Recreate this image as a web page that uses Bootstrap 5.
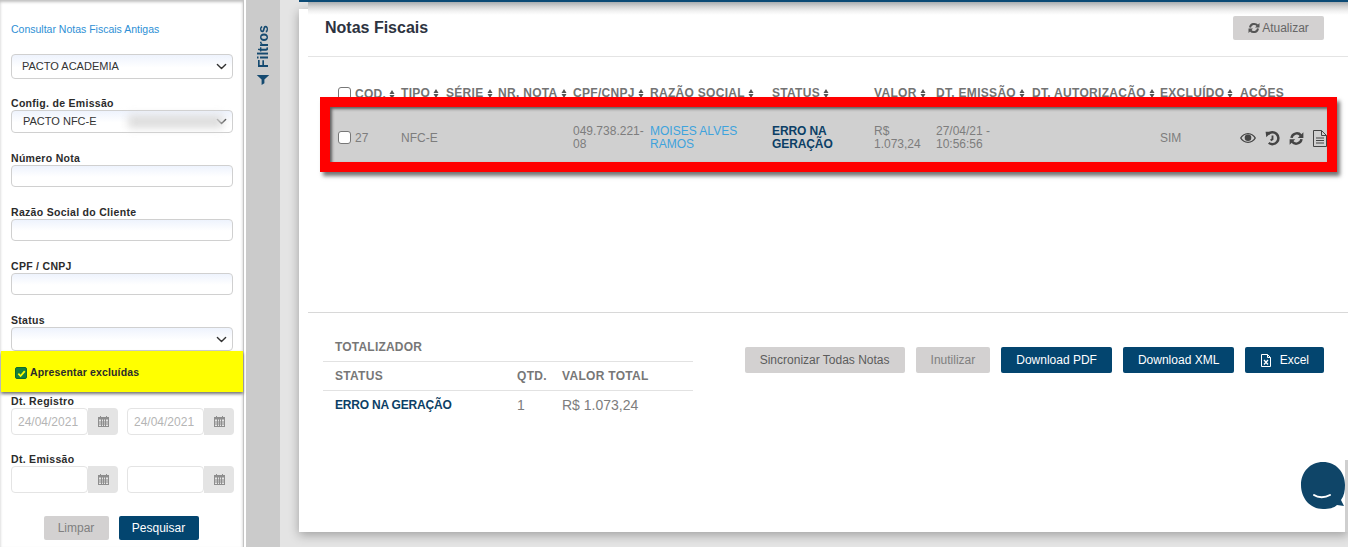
<!DOCTYPE html>
<html lang="pt-BR">
<head>
<meta charset="utf-8">
<title>Notas Fiscais</title>
<link rel="stylesheet" href="https://cdn.jsdelivr.net/npm/bootstrap@5.3.0/dist/css/bootstrap.min.css">
<style>
html,body{height:547px;overflow:hidden;margin:0;background:#e4e4e4;font-family:"Liberation Sans",Arial,sans-serif;}
.shell{height:547px;position:relative;overflow:hidden;}
.side{width:243px;flex:none;background:#fff;padding:23px 10px 0 11px;position:relative;z-index:2;height:547px;box-shadow:0 2px 3px rgba(0,0,0,.25) inset;}
.sep{width:3px;flex:none;background:#fff;border-left:1px solid #c4c4c4;}
.strip{width:34px;flex:none;background:#cbcbcb;padding-top:25px;}
.strip-label{writing-mode:vertical-rl;transform:rotate(180deg);color:#154a70;font-weight:700;font-size:14px;line-height:34px;display:flex;align-items:center;gap:7px;margin:0 auto;height:60px;}
.gutter{width:19px;flex:none;}
.stage{flex:1;position:relative;}
.topline{height:2px;background:#0b4a75;position:relative;z-index:3;}
.topline::after{content:"";position:absolute;left:9px;right:0;top:2px;height:13px;background:linear-gradient(#a9adb0,#d4d4d4 35%,#f1f1f1 70%,#fff);}
.panel{position:absolute;left:0;right:0;top:9px;height:523px;background:#fff;box-shadow:0 3px 10px rgba(0,0,0,.3);}
.panel-tail{position:absolute;right:0;top:451px;width:3px;height:72px;background:#cfcfcf;}
.old-link{font-size:10.5px;line-height:13px;color:#2d8fd5;text-decoration:none;display:block;margin-bottom:18px;}
.fld{font-size:11px;color:#333;border:1px solid #d0d0d0;border-radius:4px;width:222px;padding:0 10px;height:24px;min-height:0;background-color:#fff;background-image:linear-gradient(#eef3fd,#fff 55%);box-shadow:none;}
input.fld{height:22px;}
select.fld{background-image:url("data:image/svg+xml,%3csvg xmlns='http://www.w3.org/2000/svg' viewBox='0 0 16 16'%3e%3cpath fill='none' stroke='%23333' stroke-linecap='round' stroke-linejoin='round' stroke-width='2' d='m2 5 6 6 6-6'/%3e%3c/svg%3e"),linear-gradient(#eef3fd,#fff 55%);background-repeat:no-repeat;background-position:right 5px center,0 0;background-size:11px 11px,auto;}
.fld-tall{height:25px;}
.fld-short{height:23px;padding-left:11px;}
.lbl{font-size:10.5px;font-weight:700;color:#2b2b2b;line-height:13px;letter-spacing:.3px;margin:0;display:block;}
.gap-a{margin-bottom:18px;}
.gap-b{margin-bottom:19px;}
.blurred{position:absolute;left:117px;top:5px;width:95px;height:13px;background:#dcdcdc;filter:blur(4px);}
.sel-wrap{position:relative;}
.yellow{background:#ff0;height:41px;margin:0 -10px 3px -10px;box-shadow:0 2px 3px rgba(0,0,0,.55);display:flex;align-items:center;padding:3px 0 0 14px;gap:3px;font-size:10.5px;font-weight:700;letter-spacing:.15px;color:#2b2b2b;position:relative;}
.yellow .ck{width:12px;height:12px;border-radius:2px;background:#16803c;border:1px solid #0f6a2f;display:flex;align-items:center;justify-content:center;}
.dates{display:flex;gap:9px;margin-bottom:18px;}
.date-g{display:flex;width:107px;}
.date-i{width:77px;height:27px;font-size:12px;color:#b5b5b5;border:1px solid #e4e4e4;border-radius:4px;padding:0 6px;line-height:26px;background:#fff;}
.date-a{width:30px;height:27px;background:#e4e4e4;border-radius:0 4px 4px 0;display:flex;align-items:center;justify-content:center;}
.side-btns{display:flex;justify-content:center;gap:10px;margin-top:23px;padding-right:2px;}
.bt{border:0;border-radius:2px;font-size:12px;line-height:15px;font-family:inherit;}
.bt-gray{background:#d3d1d1;color:#5c5c5c;}
.bt-mute{background:#d3d1d1;color:#808080;}
.bt-navy{background:#03456f;color:#fff;}
.bt-limpar{width:65px;height:24px;}
.bt-pesq{width:80px;height:24px;}
.panel-head{height:48px;margin-left:9px;border-bottom:1px solid #e4e4e4;padding:0 24px 0 17px;display:flex;justify-content:space-between;align-items:flex-start;}
.panel-title{font-size:16px;font-weight:700;color:#2d3340;margin:9px 0 0;line-height:19px;}
.upd{background:#d3d1d1;color:#666;font-size:12px;height:24px;width:91px;margin-top:7px;display:flex;align-items:center;justify-content:center;gap:2px;}
.grid-wrap{height:256px;border-bottom:1px solid #d8d8d8;margin-left:9px;padding:30px 0 0 22px;}
.nf{table-layout:fixed;width:997px;border-collapse:collapse;font-size:12px;line-height:13px;color:#7d7d7d;}
.nf col:nth-child(1){width:71px}.nf col:nth-child(2){width:45px}.nf col:nth-child(3){width:52px}.nf col:nth-child(4){width:75px}.nf col:nth-child(5){width:77px}.nf col:nth-child(6){width:122px}.nf col:nth-child(7){width:102px}.nf col:nth-child(8){width:62px}.nf col:nth-child(9){width:96px}.nf col:nth-child(10){width:128px}.nf col:nth-child(11){width:80px}.nf col:nth-child(12){width:87px}
.nf th{font-weight:700;font-size:12px;letter-spacing:.3px;padding:0;height:20px;white-space:nowrap;color:#737373;vertical-align:top;}
.nf td{padding:0;height:62px;background:#d0d0d0;vertical-align:middle;}
.nf th:first-child,.nf td:first-child{padding-left:8px;}
.cb{width:13px;height:13px;border:1px solid #777;border-radius:3px;background:#fff;display:inline-block;vertical-align:-2px;margin-right:4px;}
.sort{display:inline-block;width:6px;height:9px;margin-left:3px;vertical-align:-1px;}
.red-box{position:absolute;left:21px;top:88px;width:1017px;height:75px;border:10px solid #f00;box-shadow:3px 4px 4px rgba(0,0,0,.55),inset 2px 2px 3px rgba(0,0,0,.55);pointer-events:none;}
.rz{color:#3ea3dd;}
.st{color:#0c3f66;font-weight:700;letter-spacing:-.1px;}
.acts{display:flex;gap:9px;align-items:center;color:#444;}
.foot{margin-left:9px;display:flex;padding:26px 24px 0 15px;}
.tot{width:370px;font-size:12px;color:#7d7d7d;}
.tot-title{font-weight:700;color:#777;font-size:12px;line-height:17px;padding:0 0 5px 12px;letter-spacing:.2px;}
.tot-row{display:flex;height:29px;align-items:center;border-top:1px solid #e2e2e2;padding-left:12px;}
.c1{width:182px;}.c2{width:45px;}
.tot-h{font-weight:700;color:#777;letter-spacing:.3px;}
.tot-val{font-size:14px;}
.tot-val .st{font-size:12px;letter-spacing:-.2px;}
.foot-btns{flex:1;display:flex;justify-content:flex-end;gap:11px;padding-top:8px;}
.foot-btns .bt{height:26px;padding:0 15px;}
.chat{position:absolute;left:1300px;top:461px;z-index:4;}
</style>
</head>
<body>
<div class="shell d-flex">
  <aside class="side">
    <a href="#" class="old-link">Consultar Notas Fiscais Antigas</a>
    <select class="fld fld-tall form-select d-block gap-a"><option>PACTO ACADEMIA</option></select>
    <label class="lbl">Config. de Emissão</label>
    <div class="sel-wrap gap-b"><select class="fld fld-short form-select d-block"><option>PACTO NFC-E</option></select><div class="blurred"></div></div>
    <label class="lbl">Número Nota</label>
    <input class="fld form-control d-block gap-b" type="text">
    <label class="lbl">Razão Social do Cliente</label>
    <input class="fld form-control d-block gap-b" type="text">
    <label class="lbl">CPF / CNPJ</label>
    <input class="fld form-control d-block gap-b" type="text">
    <label class="lbl">Status</label>
    <select class="fld form-select d-block"><option></option></select>
    <div class="yellow"><span class="ck"><svg width="9" height="9" viewBox="0 0 10 10"><path d="M1.5 5.2 4 7.8 8.6 2.4" fill="none" stroke="#ff0" stroke-width="2"/></svg></span><span>Apresentar excluídas</span></div>
    <label class="lbl">Dt. Registro</label>
    <div class="dates">
      <div class="date-g"><div class="date-i">24/04/2021</div><div class="date-a"><svg width="11" height="11" viewBox="0 0 11 11"><path fill="#8e8e8e" d="M2 0h1v1h5V0h1v1h2v10H0V1h2zM1 3.500V10h9V3.500z"/><path stroke="#8e8e8e" d="M1 6h9M1 8h9M3.500 3v7M5.500 3v7M7.500 3v7"/></svg></div></div>
      <div class="date-g"><div class="date-i">24/04/2021</div><div class="date-a"><svg width="11" height="11" viewBox="0 0 11 11"><path fill="#8e8e8e" d="M2 0h1v1h5V0h1v1h2v10H0V1h2zM1 3.500V10h9V3.500z"/><path stroke="#8e8e8e" d="M1 6h9M1 8h9M3.500 3v7M5.500 3v7M7.500 3v7"/></svg></div></div>
    </div>
    <label class="lbl">Dt. Emissão</label>
    <div class="dates mb-0">
      <div class="date-g"><div class="date-i"></div><div class="date-a"><svg width="11" height="11" viewBox="0 0 11 11"><path fill="#8e8e8e" d="M2 0h1v1h5V0h1v1h2v10H0V1h2zM1 3.500V10h9V3.500z"/><path stroke="#8e8e8e" d="M1 6h9M1 8h9M3.500 3v7M5.500 3v7M7.500 3v7"/></svg></div></div>
      <div class="date-g"><div class="date-i"></div><div class="date-a"><svg width="11" height="11" viewBox="0 0 11 11"><path fill="#8e8e8e" d="M2 0h1v1h5V0h1v1h2v10H0V1h2zM1 3.500V10h9V3.500z"/><path stroke="#8e8e8e" d="M1 6h9M1 8h9M3.500 3v7M5.500 3v7M7.500 3v7"/></svg></div></div>
    </div>
    <div class="side-btns">
      <button class="bt bt-mute bt-limpar">Limpar</button>
      <button class="bt bt-navy bt-pesq">Pesquisar</button>
    </div>
  </aside>
  <div class="sep"></div>
  <div class="strip"><div class="strip-label"><svg width="14" height="11" viewBox="0 0 14 11"><path fill="#154a70" d="M0 11h14L8.500 6V0l-3 2v4z"/></svg><span>Filtros</span></div></div>
  <div class="gutter"></div>
  <main class="stage">
    <div class="topline"></div>
    <section class="panel">
      <div class="panel-head">
        <h1 class="panel-title">Notas Fiscais</h1>
        <button class="bt upd"><svg width="12" height="12" viewBox="0 0 24 24"><path fill="none" stroke="#555" stroke-width="4" d="M4 11a8.500 8.500 0 0 1 15-4M20 13a8.500 8.500 0 0 1-15 4"/><path fill="#555" d="M23 2v9h-9zM1 22v-9h9z"/></svg>Atualizar</button>
      </div>
      <div class="grid-wrap">
        <table class="nf">
          <colgroup><col><col><col><col><col><col><col><col><col><col><col><col></colgroup>
          <thead><tr>
            <th><span class="cb"></span>COD.<svg class="sort" viewBox="0 0 5 9"><path fill="#555" d="M0 4 2.500 0 5 4zM0 5h5L2.500 9z"/></svg></th>
            <th>TIPO<svg class="sort" viewBox="0 0 5 9"><path fill="#555" d="M0 4 2.500 0 5 4zM0 5h5L2.500 9z"/></svg></th>
            <th>SÉRIE<svg class="sort" viewBox="0 0 5 9"><path fill="#555" d="M0 4 2.500 0 5 4zM0 5h5L2.500 9z"/></svg></th>
            <th>NR. NOTA<svg class="sort" viewBox="0 0 5 9"><path fill="#555" d="M0 4 2.500 0 5 4zM0 5h5L2.500 9z"/></svg></th>
            <th>CPF/CNPJ<svg class="sort" viewBox="0 0 5 9"><path fill="#555" d="M0 4 2.500 0 5 4zM0 5h5L2.500 9z"/></svg></th>
            <th>RAZÃO SOCIAL<svg class="sort" viewBox="0 0 5 9"><path fill="#555" d="M0 4 2.500 0 5 4zM0 5h5L2.500 9z"/></svg></th>
            <th>STATUS<svg class="sort" viewBox="0 0 5 9"><path fill="#555" d="M0 4 2.500 0 5 4zM0 5h5L2.500 9z"/></svg></th>
            <th>VALOR<svg class="sort" viewBox="0 0 5 9"><path fill="#555" d="M0 4 2.500 0 5 4zM0 5h5L2.500 9z"/></svg></th>
            <th>DT. EMISSÃO<svg class="sort" viewBox="0 0 5 9"><path fill="#555" d="M0 4 2.500 0 5 4zM0 5h5L2.500 9z"/></svg></th>
            <th>DT. AUTORIZAÇÃO<svg class="sort" viewBox="0 0 5 9"><path fill="#555" d="M0 4 2.500 0 5 4zM0 5h5L2.500 9z"/></svg></th>
            <th>EXCLUÍDO<svg class="sort" viewBox="0 0 5 9"><path fill="#555" d="M0 4 2.500 0 5 4zM0 5h5L2.500 9z"/></svg></th>
            <th>AÇÕES</th>
          </tr></thead>
          <tbody><tr>
            <td><span class="cb"></span>27</td><td>NFC-E</td><td></td><td></td><td>049.738.221-08</td>
            <td class="rz">MOISES ALVES RAMOS</td><td class="st">ERRO NA GERAÇÃO</td><td>R$ 1.073,24</td><td>27/04/21 - 10:56:56</td><td></td><td>SIM</td>
            <td><div class="acts">
              <svg width="16" height="12" viewBox="0 0 16 12"><path fill="#444" d="M8 1C4.500 1 1.500 3.200 0 6c1.500 2.800 4.500 5 8 5s6.500-2.200 8-5c-1.500-2.800-4.500-5-8-5zm0 1.200c2.800 0 5.200 1.500 6.500 3.800-1.300 2.300-3.700 3.800-6.500 3.800S2.800 8.300 1.500 6C2.800 3.700 5.200 2.200 8 2.200z"/><circle cx="8" cy="5.800" r="3.300" fill="#444"/></svg>
              <svg width="15" height="15" viewBox="0 0 24 24"><path fill="none" stroke="#444" stroke-width="4" d="M5 5a9.500 9.500 0 1 1 1 14"/><path fill="#444" d="M1 1h10l-9 9z"/><path fill="none" stroke="#444" stroke-width="3" d="M12 7v6l-3 2"/></svg>
              <svg width="15" height="15" viewBox="0 0 24 24"><path fill="none" stroke="#444" stroke-width="4" d="M4 11a8.500 8.500 0 0 1 15-4M20 13a8.500 8.500 0 0 1-15 4"/><path fill="#444" d="M23 2v9h-9zM1 22v-9h9z"/></svg>
              <svg width="14" height="17" viewBox="0 0 14 17"><path fill="none" stroke="#444" d="M.5.500h8l5 5v11H.5zM8.500.500v5h5M3 8h8M3 10.500h8M3 13h8"/></svg>
            </div></td>
          </tr></tbody>
        </table>
      </div>
      <div class="foot">
        <div class="tot">
          <div class="tot-title">TOTALIZADOR</div>
          <div class="tot-row tot-h"><span class="c1">STATUS</span><span class="c2">QTD.</span><span>VALOR TOTAL</span></div>
          <div class="tot-row tot-val"><span class="c1 st">ERRO NA GERAÇÃO</span><span class="c2">1</span><span>R$ 1.073,24</span></div>
        </div>
        <div class="foot-btns">
          <button class="bt bt-gray">Sincronizar Todas Notas</button>
          <button class="bt bt-mute">Inutilizar</button>
          <button class="bt bt-navy">Download PDF</button>
          <button class="bt bt-navy">Download XML</button>
          <button class="bt bt-navy"><svg width="12" height="13" viewBox="0 0 12 13" class="me-1"><path fill="none" stroke="#fff" d="M1.500.500h6l3 3v9h-9zM7.500.500v3h3"/><path stroke="#fff" stroke-width="1.300" d="M4 6l4 4.500M8 6l-4 4.500"/></svg> Excel</button>
        </div>
      </div>
      <div class="red-box"></div>
      <div class="panel-tail"></div>
    </section>
  </main>
  <svg class="chat" width="46" height="49" viewBox="0 0 46 49"><path fill="#0f4568" d="M23 1C10 1 1 11 1 24s9 24 22 24c6 0 11-1 14-4l7 1-3-6c3-4 4-9 4-15C45 11 36 1 23 1z"/><path fill="none" stroke="#fff" stroke-width="2" stroke-linecap="round" d="M14 34c4 3 11 3 16 0"/></svg>
</div>
</body>
</html>
